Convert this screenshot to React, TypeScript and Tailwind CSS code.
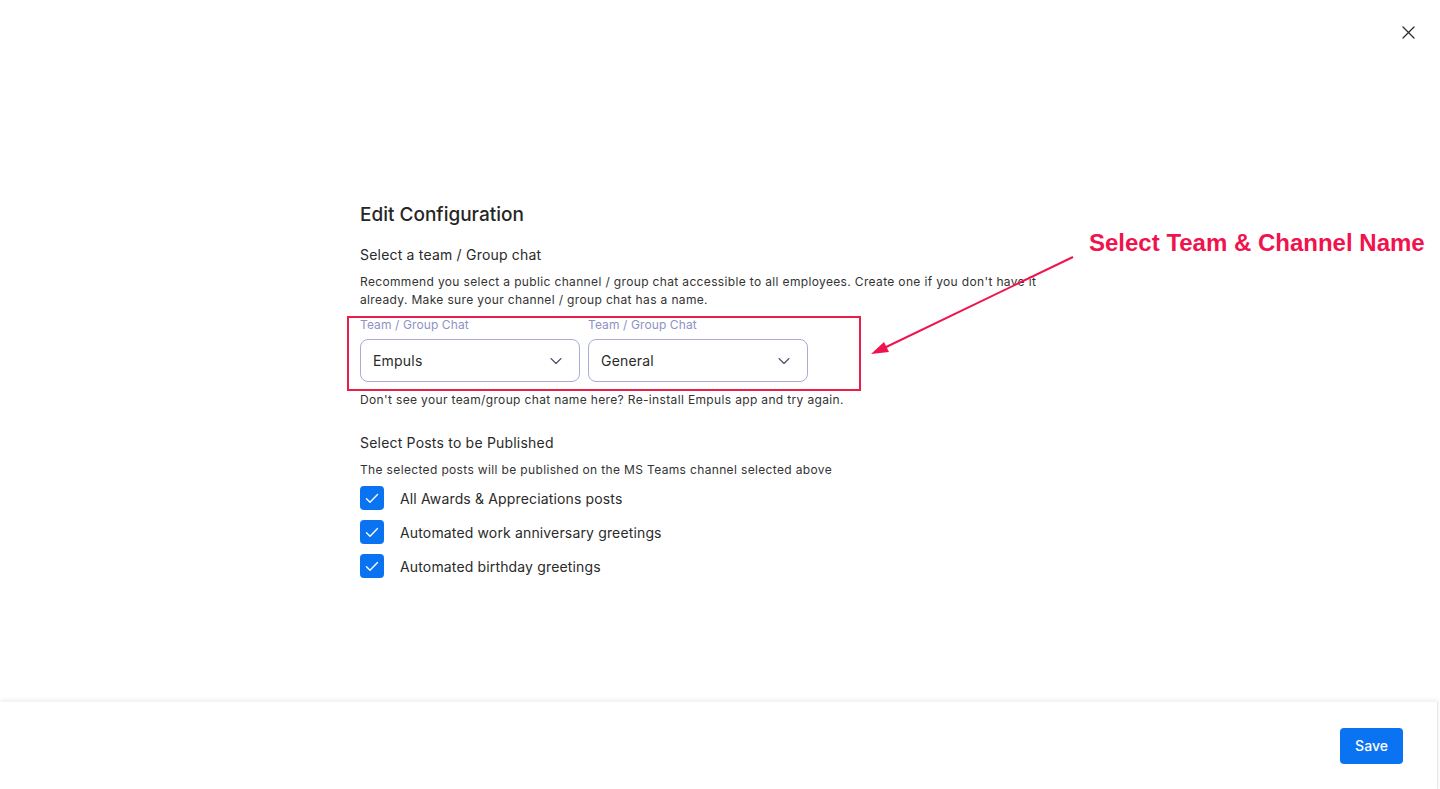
import { useState } from "react";

type PostOption = {
  id: string;
  label: string;
};

const postOptions: PostOption[] = [
  { id: "awards", label: "All Awards & Appreciations posts" },
  { id: "anniversary", label: "Automated work anniversary greetings" },
  { id: "birthday", label: "Automated birthday greetings" },
];

function ChevronDown() {
  return (
    <svg width="12" height="8" viewBox="0 0 12 8" fill="none">
      <path d="M1 1.5L6 6.5L11 1.5" stroke="#4b4f66" strokeWidth="1.1" strokeLinecap="round" strokeLinejoin="round" />
    </svg>
  );
}

function SelectBox({ label, value }: { label: string; value: string }) {
  return (
    <div className="flex flex-col">
      <span className="text-[12px] leading-[16px] tracking-[0.1px] text-[#8e92c4]">{label}</span>
      <button
        type="button"
        className="mt-[6px] flex h-[43px] w-[220px] items-center justify-between rounded-[8px] border border-[#a7abd6] bg-white pl-[12px] pr-[17px] text-left text-[14px] tracking-[0.2px] text-[#2a2a2a]"
      >
        <span>{value}</span>
        <ChevronDown />
      </button>
    </div>
  );
}

function CheckRow({ option, checked, onToggle }: { option: PostOption; checked: boolean; onToggle: () => void }) {
  return (
    <label className="flex h-[34px] cursor-pointer items-center gap-[16px]" onClick={onToggle}>
      <span
        className={`flex h-[24px] w-[24px] items-center justify-center rounded-[4px] ${
          checked ? "bg-[#0a73f2]" : "border border-[#a7abd6] bg-white"
        }`}
      >
        {checked && (
          <svg width="14" height="11" viewBox="0 0 14 11" fill="none">
            <path d="M1.5 5.8L5 9.2L12.5 1.5" stroke="white" strokeWidth="1.4" strokeLinecap="round" strokeLinejoin="round" />
          </svg>
        )}
      </span>
      <span className="text-[14px] tracking-[0.15px] text-[#2a2a2a]">{option.label}</span>
    </label>
  );
}

export default function App() {
  const [checked, setChecked] = useState<Record<string, boolean>>({
    awards: true,
    anniversary: true,
    birthday: true,
  });

  function toggle(id: string) {
    setChecked((prev) => ({ ...prev, [id]: !prev[id] }));
  }

  return (
    <div className="flex h-screen w-full flex-col bg-white font-['Inter','Noto_Sans',sans-serif] text-[#2a2a2a]">
      <main className="relative flex-1">
        <button type="button" className="absolute right-[25px] top-[26px] text-[#333]" aria-label="Close">
          <svg width="13" height="13" viewBox="0 0 13 13" fill="none">
            <path d="M1 1L12 12M12 1L1 12" stroke="#2d2d2d" strokeWidth="1.3" strokeLinecap="round" />
          </svg>
        </button>

        <div className="pl-[360px] pt-[203px]">
          <div className="w-[690px]">
            <h1 className="text-[19px] font-medium leading-[24px] text-[#262626]">Edit Configuration</h1>

            <h2 className="mt-[18px] text-[14px] leading-[20px] tracking-[0.2px]">Select a team / Group chat</h2>
            <p className="mt-[8px] text-[12px] leading-[18px] tracking-[0.35px] text-[#333]">
              Recommend you select a public channel / group chat accessible to all employees. Create one if you don't have it
              already. Make sure your channel / group chat has a name.
            </p>

            <div className="relative mt-[8px] flex gap-[8px]">
              <SelectBox label="Team / Group Chat" value="Empuls" />
              <SelectBox label="Team / Group Chat" value="General" />
              {/* annotation frame around the pickers */}
              <div className="pointer-events-none absolute left-[-13px] top-[-1px] h-[75px] w-[514px] border-2 border-[#ec1c4b]" />
            </div>

            <p className="mt-[9px] text-[12px] leading-[18px] tracking-[0.35px] text-[#333]">
              Don't see your team/group chat name here? Re-install Empuls app and try again.
            </p>

            <h2 className="mt-[24px] text-[14px] leading-[20px] tracking-[0.2px]">Select Posts to be Published</h2>
            <p className="mt-[8px] text-[12px] leading-[18px] tracking-[0.35px] text-[#333]">
              The selected posts will be published on the MS Teams channel selected above
            </p>

            <div className="mt-[2px] flex flex-col">
              {postOptions.map((option) => (
                <CheckRow key={option.id} option={option} checked={checked[option.id]} onToggle={() => toggle(option.id)} />
              ))}
            </div>
          </div>
        </div>

        {/* callout */}
        <span className="absolute left-[1089px] top-[227px] whitespace-nowrap font-['Liberation_Sans',Arial,sans-serif] text-[24px] font-bold leading-[32px] text-[#f0134d]">
          Select Team &amp; Channel Name
        </span>
        <svg className="pointer-events-none absolute left-0 top-0" width="1440" height="702">
          <line x1="1073" y1="257" x2="882" y2="349" stroke="#f0134d" strokeWidth="2" />
          <polygon points="871,354 884,342 889,352" fill="#f0134d" />
        </svg>
      </main>

      <footer className="flex h-[87px] w-[1438px] items-center justify-end border-r border-[#e8e8e8] pr-[34px] shadow-[0_-2px_4px_rgba(0,0,0,0.07)]">
        <button
          type="button"
          className="h-[36px] w-[63px] rounded-[4px] bg-[#0a73f2] text-[14px] font-medium text-white"
        >
          Save
        </button>
      </footer>
    </div>
  );
}
